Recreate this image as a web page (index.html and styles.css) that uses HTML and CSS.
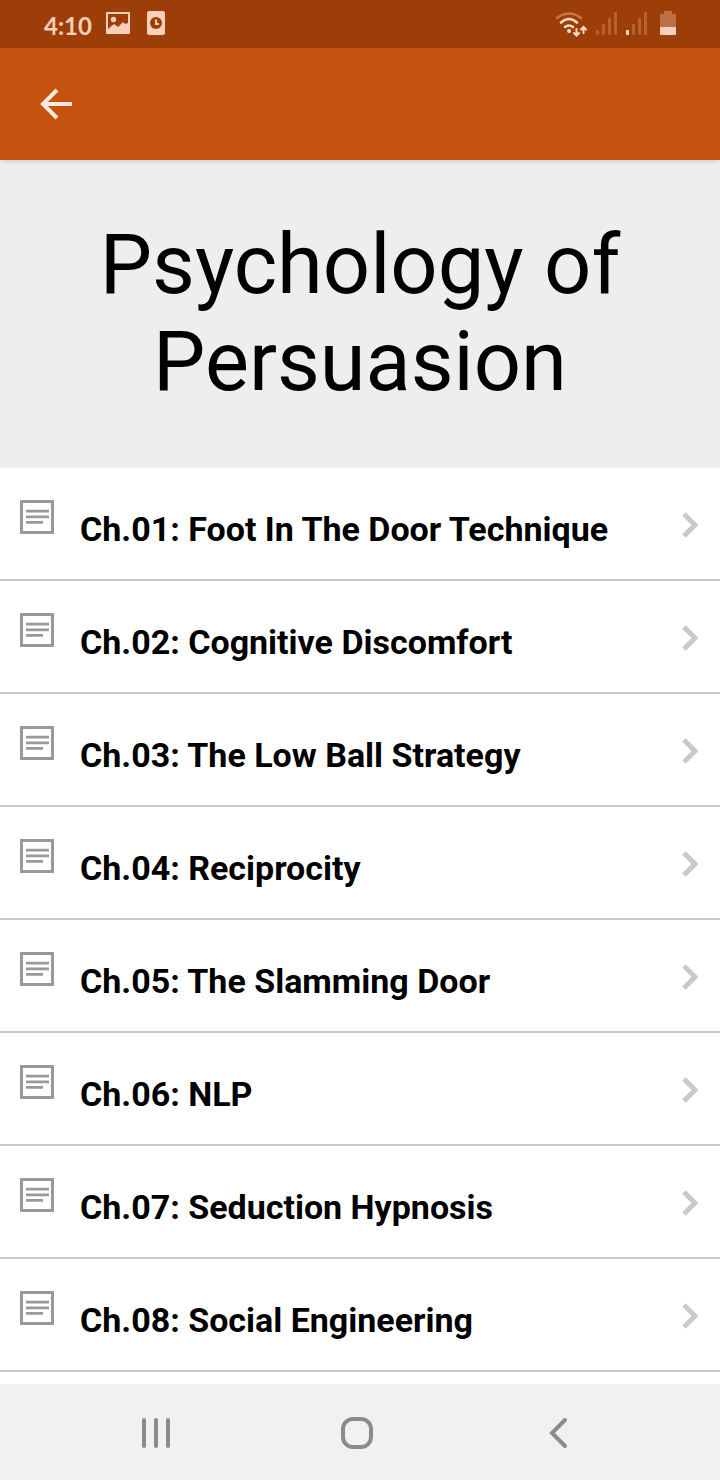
FILE: index.html
```html
<!DOCTYPE html>
<html lang="en">
<head>
  <meta charset="UTF-8" />
  <meta name="viewport" content="width=device-width, initial-scale=1.0"/>
  <title>Psychology of Persuasion</title>
  <link rel="stylesheet" href="styles.css">
</head>
<body>

  <!-- shared icons for the chapter rows -->
  <svg class="sprite" aria-hidden="true">
    <symbol id="icon-page" viewBox="0 0 34 34">
      <rect x="1.5" y="1.5" width="31" height="31" fill="none" stroke="#999" stroke-width="3"/>
      <path d="M6 11.2h23M6 16.8h23M6 22.400h17" stroke="#999" stroke-width="2.8"/>
    </symbol>
    <symbol id="icon-next" viewBox="0 0 16 26">
      <path d="M2 2l11 11L2 24" fill="none" stroke="#c9c9c9" stroke-width="5"/>
    </symbol>
  </svg>

  <div class="statusbar">
    <div class="status-left">
      <span class="time">4:10</span>
      <svg class="status-icon" width="24" height="24" viewBox="0 0 24 24">
        <path fill-rule="evenodd" d="M1 0h22a1 1 0 0 1 1 1v20a1 1 0 0 1-1 1H1a1 1 0 0 1-1-1V1a1 1 0 0 1 1-1zM2 2v15l6-5 4 3 5-5 2 2 3-1V2z"/>
        <circle cx="7.500" cy="7.500" r="2.700"/>
      </svg>
      <svg class="status-icon" width="24" height="24" viewBox="0 0 24 24">
        <rect x="3" y="-1" width="18" height="24" rx="2"/>
        <circle cx="12" cy="11" r="6" fill="#9d3e09"/>
        <path d="M12 7.500V12h3" fill="none" stroke="#f8cfb8" stroke-width="2"/>
      </svg>
    </div>
    <div class="status-right">
      <svg class="wifi" width="32" height="24" viewBox="2 1 32 24" fill="none" stroke-linecap="round">
        <path d="M3 7Q15-2 27 7" stroke="#ca7549" stroke-width="2.600"/>
        <path d="M7 11.500Q15 4.500 23 11.500M11 16q4-3 8 0" stroke="#fbdccb" stroke-width="2.600"/>
        <circle cx="15" cy="20" r="2" fill="#fbdccb"/>
        <path d="M22.500 18v6M20 22l2.500 2.500 2.500-2.500M29.500 22v-5M27 18.500l2.500-2.500 2.500 2.500" stroke="#fbdccb" stroke-width="2"/>
      </svg>
      <svg width="22" height="24" viewBox="0 0 22 24" fill="#b96032">
        <rect x="0" y="18" width="3" height="5" rx="1"/>
        <rect x="6" y="12" width="3" height="11" rx="1"/>
        <rect x="12" y="6" width="3" height="17" rx="1"/>
        <rect x="18" y="0" width="3" height="23" rx="1"/>
      </svg>
      <svg width="22" height="24" viewBox="0 0 22 24" fill="#b96032">
        <rect x="0" y="18" width="3" height="5" rx="1" fill="#fbdccb"/>
        <rect x="6" y="12" width="3" height="11" rx="1"/>
        <rect x="12" y="6" width="3" height="17" rx="1"/>
        <rect x="18" y="0" width="3" height="23" rx="1"/>
      </svg>
      <svg class="battery" width="16" height="24" viewBox="0 0 16 24">
        <path d="M4 -1h8v3h3a1 1 0 0 1 1 1v12H0V3a1 1 0 0 1 1-1h3z" fill="#bd7045"/>
        <path d="M0 15h16v7a1 1 0 0 1-1 1H1a1 1 0 0 1-1-1z" fill="#f8cfb8"/>
      </svg>
    </div>
  </div>

  <header class="appbar">
    <button class="back-btn" aria-label="Back">
      <svg width="32" height="32" viewBox="0 0 32 32" fill="none" stroke="#fdeadf" stroke-width="4">
        <path d="M32 16H4M17 2L3 16l14 14"/>
      </svg>
    </button>
  </header>

  <main>
    <div class="hero">
      <h1>Psychology of Persuasion</h1>
    </div>

    <ul class="chapters">
      <li><a class="chapter" href="#ch1"><svg class="page"><use href="#icon-page"/></svg><span class="name">Ch.01: Foot In The Door Technique</span><svg class="next"><use href="#icon-next"/></svg></a></li>
      <li><a class="chapter" href="#ch2"><svg class="page"><use href="#icon-page"/></svg><span class="name">Ch.02: Cognitive Discomfort</span><svg class="next"><use href="#icon-next"/></svg></a></li>
      <li><a class="chapter" href="#ch3"><svg class="page"><use href="#icon-page"/></svg><span class="name">Ch.03: The Low Ball Strategy</span><svg class="next"><use href="#icon-next"/></svg></a></li>
      <li><a class="chapter" href="#ch4"><svg class="page"><use href="#icon-page"/></svg><span class="name">Ch.04: Reciprocity</span><svg class="next"><use href="#icon-next"/></svg></a></li>
      <li><a class="chapter" href="#ch5"><svg class="page"><use href="#icon-page"/></svg><span class="name">Ch.05: The Slamming Door</span><svg class="next"><use href="#icon-next"/></svg></a></li>
      <li><a class="chapter" href="#ch6"><svg class="page"><use href="#icon-page"/></svg><span class="name">Ch.06: NLP</span><svg class="next"><use href="#icon-next"/></svg></a></li>
      <li><a class="chapter" href="#ch7"><svg class="page"><use href="#icon-page"/></svg><span class="name">Ch.07: Seduction Hypnosis</span><svg class="next"><use href="#icon-next"/></svg></a></li>
      <li><a class="chapter" href="#ch8"><svg class="page"><use href="#icon-page"/></svg><span class="name">Ch.08: Social Engineering</span><svg class="next"><use href="#icon-next"/></svg></a></li>
    </ul>
  </main>

  <nav class="navbar">
    <button aria-label="Recent apps">
      <svg width="32" height="32" viewBox="0 0 32 32" stroke="#8b8b8b" stroke-width="4" stroke-linecap="round">
        <path d="M5 3v26M17 3v26M29 3v26"/>
      </svg>
    </button>
    <button aria-label="Home">
      <svg width="32" height="32" viewBox="0 0 32 32" fill="none" stroke="#8b8b8b" stroke-width="4">
        <rect x="2" y="2" width="28" height="28" rx="10"/>
      </svg>
    </button>
    <button aria-label="Go back">
      <svg width="32" height="32" viewBox="0 0 32 32" fill="none" stroke="#8b8b8b" stroke-width="4" stroke-linecap="round">
        <path d="M22 3L9 16l13 13"/>
      </svg>
    </button>
  </nav>

</body>
</html>
```
FILE: styles.css
```css
* {
  margin: 0;
  padding: 0;
  box-sizing: border-box;
}

body {
  font-family: Roboto, "Liberation Sans", sans-serif;
  background: #fff;
  color: #000;
  min-height: 100vh;
  display: flex;
  flex-direction: column;
}

svg {
  display: block;
  flex-shrink: 0;
  overflow: visible;
}

button {
  background: none;
  border: none;
  cursor: pointer;
}

.sprite {
  display: none;
}

.statusbar {
  height: 48px;
  padding: 0 44px;
  display: flex;
  align-items: center;
  justify-content: space-between;
  background: #9d3e09;
}

.status-left,
.status-right {
  display: flex;
  align-items: center;
}

.status-left {
  gap: 14px;
}

.status-right {
  gap: 8px;
}

.time {
  font-family: Lato, sans-serif;
  font-size: 24px;
  line-height: 44px;
  padding-top: 4px;
  font-weight: 700;
  color: #f8cfb8;
}

.status-icon {
  fill: #f8cfb8;
}

.battery {
  margin-left: 4px;
}

.appbar {
  height: 112px;
  padding: 0 40px;
  display: flex;
  align-items: center;
  background: #c6500d;
  box-shadow: 0 4px 4px -2px rgba(0, 0, 0, 0.12);
  z-index: 1;
}

main {
  flex: 1;
}

.hero {
  padding: 56px 80px 58px;
  background: #eee;
}

h1 {
  font-size: 83px;
  line-height: 97px;
  font-weight: 400;
  text-align: center;
}

.chapters {
  list-style: none;
}

.chapter {
  height: 113px;
  padding: 0 20px;
  display: flex;
  align-items: center;
  border-bottom: 2px solid #c8c8c8;
  color: #000;
  text-decoration: none;
}

.page {
  width: 34px;
  height: 34px;
  margin-right: 26px;
  margin-bottom: 14px;
}

.name {
  flex: 1;
  padding-top: 10px;
  font-size: 34px;
  line-height: 40px;
  font-weight: 700;
}

.next {
  width: 16px;
  height: 26px;
  margin-top: 2px;
  margin-right: 2px;
}

.navbar {
  height: 96px;
  padding: 2px 60px 0 54px;
  display: flex;
  align-items: center;
  justify-content: space-around;
  background: #f1f1f1;
}
```
